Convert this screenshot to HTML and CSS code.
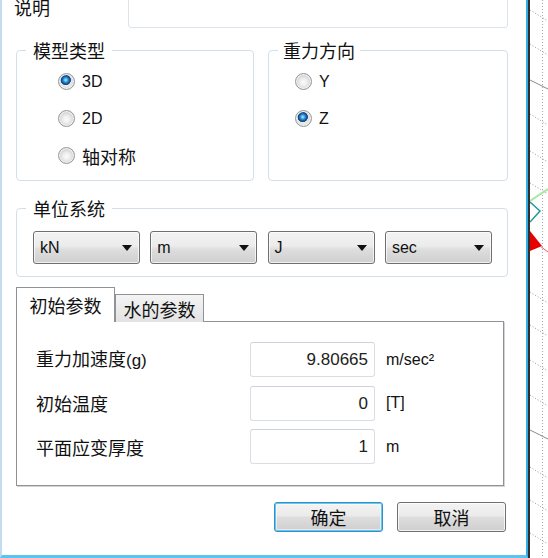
FILE: index.html
```html
<!DOCTYPE html>
<html lang="zh-CN">
<head>
<meta charset="utf-8">
<title>设置</title>
<link rel="stylesheet" href="styles.css">
</head>
<body>
<div class="screen">
  <div class="window">
    <div class="dialog">
      <div class="desc-row">
        <span class="desc-label">说明</span>
        <div class="desc-input"></div>
      </div>

      <div class="groups">
        <fieldset class="group g-model">
          <legend>模型类型</legend>
          <div class="radios">
            <div class="radio"><span class="rdot on"></span><span class="lat">3D</span></div>
            <div class="radio"><span class="rdot"></span><span class="lat">2D</span></div>
            <div class="radio"><span class="rdot"></span><span class="cjk">轴对称</span></div>
          </div>
        </fieldset>
        <fieldset class="group g-gravity">
          <legend>重力方向</legend>
          <div class="radios">
            <div class="radio"><span class="rdot"></span><span class="lat">Y</span></div>
            <div class="radio"><span class="rdot on"></span><span class="lat">Z</span></div>
          </div>
        </fieldset>
      </div>

      <fieldset class="group g-units">
        <legend>单位系统</legend>
        <div class="selects">
          <div class="select"><span>kN</span><span class="arrow"></span></div>
          <div class="select"><span>m</span><span class="arrow"></span></div>
          <div class="select"><span>J</span><span class="arrow"></span></div>
          <div class="select"><span>sec</span><span class="arrow"></span></div>
        </div>
      </fieldset>

      <div class="tabs">
        <div class="tab-strip">
          <div class="tab active">初始参数</div>
          <div class="tab">水的参数</div>
        </div>
        <div class="tab-panel">
          <div class="param-row">
            <span class="param-label">重力加速度<span class="paren">(g)</span></span>
            <div class="field">9.80665</div>
            <span class="unit">m/sec²</span>
          </div>
          <div class="param-row">
            <span class="param-label">初始温度</span>
            <div class="field">0</div>
            <span class="unit">[T]</span>
          </div>
          <div class="param-row">
            <span class="param-label">平面应变厚度</span>
            <div class="field">1</div>
            <span class="unit">m</span>
          </div>
        </div>
      </div>

      <div class="buttons">
        <button class="btn default">确定</button>
        <button class="btn">取消</button>
      </div>
    </div>
  </div>
  <div class="canvas">
    <svg width="18" height="558" viewBox="0 0 18 558">
      <line x1="12.5" y1="0" x2="12.5" y2="558" stroke="#a8a8a8" stroke-width="1" stroke-dasharray="1 2"/>
      <g stroke="#9c9c9c" stroke-width="1" stroke-dasharray="1 2" fill="none">
        <line x1="0" y1="10" x2="18" y2="21"/>
        <line x1="0" y1="44" x2="18" y2="55"/>
        <line x1="0" y1="114" x2="18" y2="125"/>
        <line x1="0" y1="151" x2="18" y2="162"/>
        <line x1="0" y1="183" x2="18" y2="194"/>
        <line x1="0" y1="292" x2="18" y2="303"/>
        <line x1="0" y1="325" x2="18" y2="336"/>
        <line x1="0" y1="360" x2="18" y2="371"/>
        <line x1="0" y1="395" x2="18" y2="406"/>
        <line x1="0" y1="467" x2="18" y2="478"/>
        <line x1="0" y1="500" x2="18" y2="511"/>
        <line x1="0" y1="533" x2="18" y2="544"/>
      </g>
      <line x1="0" y1="80" x2="18" y2="89" stroke="#8a8a8a" stroke-width="1"/>
      <line x1="0" y1="430" x2="18" y2="439" stroke="#8a8a8a" stroke-width="1"/>
      <line x1="0" y1="201" x2="18" y2="189" stroke="#a6e8a0" stroke-width="2"/>
      <polyline points="0,202 10,211 0,222" fill="none" stroke="#1f9a98" stroke-width="1.5"/>
      <polygon points="0,231 12,246 0,251" fill="#e60000"/>
      <line x1="10" y1="246" x2="18" y2="252" stroke="#e06060" stroke-width="1"/>
    </svg>
  </div>
</div>
</body>
</html>
```

FILE: styles.css
```css
* {
  box-sizing: border-box;
}

html, body {
  margin: 0;
  padding: 0;
  background: #ffffff;
}

body {
  width: 548px;
  height: 558px;
  overflow: hidden;
  font-family: "Liberation Sans", "Noto Sans CJK SC", sans-serif;
  font-size: 18px;
  color: #111111;
}

.screen {
  display: flex;
  width: 548px;
  height: 558px;
}

.window {
  border-right: 2px solid #2e2e2e;
  height: 558px;
}

.dialog {
  width: 528px;
  height: 558px;
  border-left: 2px solid #c3daf0;
  border-right: 2px solid #2eb0e6;
  border-bottom: 3px solid #5ec4ec;
  padding: 0 18px 0 14px;
  overflow: hidden;
  background: #ffffff;
}

.canvas {
  width: 18px;
  height: 558px;
  background: #ffffff;
}

.canvas svg {
  display: block;
}

/* description row */
.desc-row {
  display: flex;
  align-items: center;
  height: 37px;
  margin-top: -9px;
  margin-left: -2px;
}

.desc-label {
  width: 114px;
  font-family: "Noto Sans CJK SC", sans-serif;
  line-height: 20px;
  margin-bottom: 5px;
}

.desc-input {
  width: 382px;
  height: 100%;
  border: 1px solid #dde4eb;
  border-radius: 3px;
}

/* group boxes */
.groups {
  display: grid;
  grid-template-columns: 238px 240px;
  column-gap: 14px;
  margin-top: 12px;
}

.group {
  margin: 0;
  padding: 0 0 0 9px;
  border: 1px solid #d5dfe7;
  border-radius: 4px;
  min-width: 0;
}

.group legend {
  padding: 0 7px;
  line-height: 20px;
  font-family: "Noto Sans CJK SC", sans-serif;
  font-size: 18px;
  color: #111;
}

.g-gravity legend {
  padding: 0 5px;
}

.radios {
  display: flex;
  flex-direction: column;
  padding: 3px 0 6px 0;
}

.g-model .radios {
  margin-left: 32px;
}

.g-gravity .radios {
  margin-left: 17px;
}

.radio {
  display: flex;
  align-items: center;
  height: 37px;
  gap: 7px;
}

.lat {
  font-family: "Liberation Sans", sans-serif;
  font-size: 16px;
  color: #111;
}

.cjk {
  font-family: "Noto Sans CJK SC", sans-serif;
  font-size: 18px;
}

.rdot {
  width: 17px;
  height: 17px;
  border-radius: 50%;
  border: 1px solid #94979b;
  background: radial-gradient(circle at 50% 55%, #fbfbfb 0, #efefef 30%, #cdcdcd 72%, #e6e6e6 100%);
  box-shadow: inset 0 0 0 1px #f4f4f4;
  flex: none;
}

.rdot.on {
  background:
    radial-gradient(circle at 45% 40%, #c9eeff 0, #4eaeea 1.6px, #1b6fb8 3.2px, #0b4784 4.4px, #33577a 4.9px, rgba(0,0,0,0) 5.4px),
    radial-gradient(circle at 50% 55%, #fbfbfb 0, #efefef 30%, #cdcdcd 72%, #e6e6e6 100%);
}

/* units */
.g-units {
  margin-top: 17px;
}

.selects {
  display: grid;
  grid-template-columns: repeat(4, 107px);
  column-gap: 10.3px;
  margin: 13px 0 12px 7px;
}

.select {
  display: flex;
  align-items: center;
  justify-content: space-between;
  height: 33px;
  padding: 0 7px 0 6px;
  border: 1px solid #6f6f6f;
  border-radius: 3px;
  background: linear-gradient(#f3f3f3 0%, #ececec 45%, #dedede 55%, #cfcfcf 100%);
  box-shadow: inset 0 0 0 1px rgba(255, 255, 255, 0.7);
  font-family: "Liberation Sans", sans-serif;
  font-size: 16px;
  color: #111;
}

.arrow {
  width: 0;
  height: 0;
  border-left: 5px solid transparent;
  border-right: 5px solid transparent;
  border-top: 6px solid #111;
}

/* tabs */
.tabs {
  margin-top: 10px;
}

.tab-strip {
  display: flex;
  align-items: flex-end;
  height: 35px;
  position: relative;
  z-index: 1;
  margin-bottom: -1px;
}

.tab {
  font-family: "Noto Sans CJK SC", sans-serif;
  font-size: 18px;
  line-height: 20px;
  display: flex;
  align-items: center;
  justify-content: center;
  width: 89px;
  height: 28px;
  border: 1px solid #8f9297;
  border-bottom: none;
  background: linear-gradient(#f4f4f4, #e2e2e2);
  padding-top: 1px;
}

.tab.active {
  width: 99px;
  height: 35px;
  background: #ffffff;
  border-color: #8f9297;
  padding-top: 0;
  padding-bottom: 1px;
}

.tab-panel {
  width: 488px;
  height: 165px;
  border: 1px solid #8f9297;
  box-shadow: 1px 1px 0 #d4d4d4;
  padding: 20px 0 0 19px;
  display: flex;
  flex-direction: column;
  row-gap: 8.5px;
}

.param-row {
  display: grid;
  grid-template-columns: 214px 125px auto;
  align-items: center;
  height: 35px;
}

.param-label {
  font-family: "Noto Sans CJK SC", sans-serif;
  font-size: 18px;
  line-height: 20px;
}

.paren {
  font-family: "Liberation Sans", sans-serif;
  font-size: 17px;
}

.field {
  height: 35px;
  border: 1px solid #d9dee4;
  border-top-color: #cdd3da;
  border-radius: 3px;
  padding-right: 6px;
  text-align: right;
  font-family: "Liberation Sans", sans-serif;
  font-size: 17px;
  line-height: 33px;
  color: #222;
}

.unit {
  padding-left: 11px;
  font-family: "Liberation Sans", sans-serif;
  font-size: 16px;
  color: #111;
}

/* buttons */
.buttons {
  display: flex;
  justify-content: flex-end;
  gap: 14px;
  margin-top: 16px;
  margin-right: 2px;
}

.btn {
  width: 109px;
  height: 30px;
  padding: 0;
  border: 1px solid #707070;
  border-radius: 3px;
  background: linear-gradient(#f3f3f3 0%, #ebebeb 45%, #dddddd 52%, #cfcfcf 100%);
  box-shadow: inset 0 0 0 1px rgba(255, 255, 255, 0.75);
  font-family: "Noto Sans CJK SC", sans-serif;
  font-size: 18px;
  line-height: 20px;
  color: #111;
}

.btn.default {
  border-color: #3a8cc6;
  box-shadow: inset 0 0 0 1px #5ecbf5, inset 0 0 0 2px rgba(255, 255, 255, 0.5);
}
```
